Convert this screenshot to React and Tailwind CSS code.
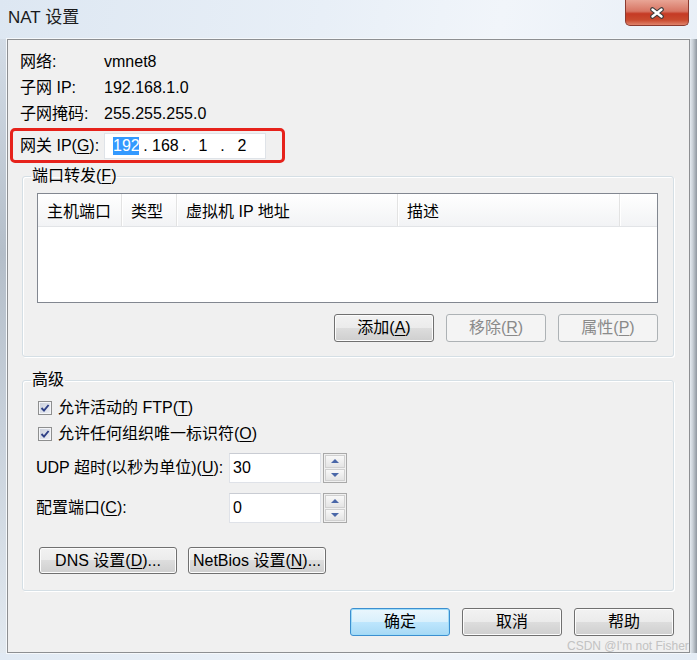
import React from "react";

const btnBase =
  "flex items-center justify-center rounded-[3px] border text-[16px] leading-[20px] whitespace-nowrap";
const btnNormal =
  "border-[#707070] bg-[linear-gradient(#f2f2f2_0%,#ebebeb_50%,#dddddd_50%,#cfcfcf_100%)] shadow-[inset_0_0_0_1px_#fcfcfc] text-black";
const btnDisabled = "border-[#adb2b5] bg-[#f4f4f4] text-[#8a8a8a]";
const btnPrimary =
  "border-[#3c8fd0] bg-[linear-gradient(#eaf6fd_0%,#d9f0fc_50%,#bee6fd_50%,#a7d9f5_100%)] shadow-[inset_0_0_0_1px_#9fdcf8] text-black";

const columns = [
  { id: 1, label: "主机端口", w: "w-[84px]" },
  { id: 2, label: "类型", w: "w-[55px]" },
  { id: 3, label: "虚拟机 IP 地址", w: "w-[221px]" },
  { id: 4, label: "描述", w: "w-[222px]" },
];

const CheckBox = () => (
  <div className="flex h-[14px] w-[14px] items-center justify-center border border-[#8e8f8f] bg-[linear-gradient(135deg,#c9cfdc,#eef0f5)] shadow-[inset_0_0_0_1px_#f4f5f8]">
    <svg width="10" height="10" viewBox="0 0 10 10">
      <path d="M1.5 5 L4 7.6 L8.6 2" fill="none" stroke="#2d3f86" strokeWidth="1.9" />
    </svg>
  </div>
);

const Spinner = () => (
  <div className="ml-[2px] flex h-[30px] w-[24px] flex-col gap-[1px] border border-[#a9a9a9] bg-[#f0f0f0] p-[1px]">
    <div className="flex flex-1 items-center justify-center border border-[#d0d0d0] bg-[linear-gradient(#f8f8f8,#e4e4e4)]">
      <svg width="8" height="4" viewBox="0 0 8 4">
        <polygon points="0,4 4,0 8,4" fill="#4a67a8" />
      </svg>
    </div>
    <div className="flex flex-1 items-center justify-center border border-[#d0d0d0] bg-[linear-gradient(#f8f8f8,#e4e4e4)]">
      <svg width="8" height="4" viewBox="0 0 8 4">
        <polygon points="0,0 8,0 4,4" fill="#4a67a8" />
      </svg>
    </div>
  </div>
);

const App = () => {
  return (
    <div className="relative flex h-[660px] w-[697px] flex-col overflow-hidden bg-[linear-gradient(100deg,#dde7f2_0%,#e8eff7_40%,#f1f5fa_62%,#e4ecf5_100%)] font-[family-name:'Liberation_Sans','Noto_Sans_CJK_SC',sans-serif] text-[16px] leading-[20px] text-black">
      {/* title bar */}
      <div className="flex h-[39px] shrink-0">
        <div className="pl-[8px] pt-[8px] text-[17px] leading-[20px] text-[#1b1b1b]">NAT 设置</div>
        <div className="ml-auto mr-[8px] flex h-[26px] w-[64px] items-center justify-center rounded-b-[5px] border border-t-0 border-[#8b3a2f] bg-[linear-gradient(#e8a596_0%,#d77563_45%,#c53a24_55%,#c94a2e_80%,#e0836b_100%)]">
          <svg width="16" height="12" viewBox="0 0 16 12">
            <path d="M3.5 2.5 L12.5 9.5 M12.5 2.5 L3.5 9.5" stroke="#3b3b3b" strokeWidth="4.6" strokeLinecap="round" />
            <path d="M3.5 2.5 L12.5 9.5 M12.5 2.5 L3.5 9.5" stroke="#ffffff" strokeWidth="2.4" strokeLinecap="round" />
          </svg>
        </div>
      </div>

      <div className="flex h-[614px] shrink-0">
        <div className="w-[7px] bg-[linear-gradient(#d3dce6,#b4bec9_35%,#c9d2dc_65%,#e2e9f0)]" />

        {/* client */}
        <div className="flex h-[614px] w-[683px] flex-col border border-[#8d8f92] bg-[#f0f0f0] shadow-[0_0_0_1px_#f5f8fb]">
          <div className="pl-[12px] pt-[9px]">
            <div className="flex h-[26px] items-center">
              <span className="w-[84px]">网络:</span>
              <span>vmnet8</span>
            </div>
            <div className="flex h-[26px] items-center">
              <span className="w-[84px]">子网 IP:</span>
              <span>192.168.1.0</span>
            </div>
            <div className="flex h-[26px] items-center">
              <span className="w-[84px]">子网掩码:</span>
              <span>255.255.255.0</span>
            </div>
          </div>

          <div className="ml-[2px] mt-[1px] flex h-[35px] w-[275px] items-center rounded-[5px] border-[3px] border-[#e6221b] pl-[7px]">
            <span className="w-[84px]">
              网关 IP(<u className="underline-offset-[2px]">G</u>):
            </span>
            <div className="flex h-[26px] w-[162px] items-center border border-[#dfe3e8] bg-white pl-[8px]">
              <span className="w-[26px] bg-[#3399ff] text-center leading-[18px] text-white">192</span>
              <span className="w-[13px] text-center">.</span>
              <span className="w-[26px] text-center">168</span>
              <span className="w-[12px] text-center">.</span>
              <span className="w-[26px] text-center">1</span>
              <span className="w-[13px] text-center">.</span>
              <span className="w-[26px] text-center">2</span>
            </div>
          </div>

          {/* port forwarding */}
          <fieldset className="ml-[14px] mr-[15px] mt-[3px] rounded-[3px] border border-[#d5dfe5] px-[8px] pb-[14px] shadow-[inset_1px_1px_0_#fff,1px_1px_0_#fff]">
            <legend className="px-[1px] leading-[20px]">
              端口转发(<u className="underline-offset-[2px]">F</u>)
            </legend>
            <div className="ml-[6px] mr-[7px] mt-[7px] h-[110px] border border-[#828790] bg-white">
              <div className="flex h-[33px] border-b border-[#e2e4e7] bg-[linear-gradient(#ffffff,#f2f3f5)]">
                {columns.map((c) => (
                  <div
                    key={c.id}
                    className={`${c.w} border-r border-[#e3e3e3] pl-[9px] pt-[8px] leading-[20px] shadow-[1px_0_0_#fff]`}
                  >
                    {c.label}
                  </div>
                ))}
                <div className="flex-1" />
              </div>
            </div>
            <div className="mr-[7px] mt-[11px] flex justify-end gap-[12px]">
              <div className={`${btnBase} ${btnNormal} h-[28px] w-[100px]`}>
                添加(<u className="underline-offset-[2px]">A</u>)
              </div>
              <div className={`${btnBase} ${btnDisabled} h-[28px] w-[100px]`}>
                移除(<u className="underline-offset-[2px]">R</u>)
              </div>
              <div className={`${btnBase} ${btnDisabled} h-[28px] w-[100px]`}>
                属性(<u className="underline-offset-[2px]">P</u>)
              </div>
            </div>
          </fieldset>

          {/* advanced */}
          <fieldset className="ml-[14px] mr-[15px] mt-[13px] rounded-[3px] border border-[#d5dfe5] px-[8px] pb-[16px] shadow-[inset_1px_1px_0_#fff,1px_1px_0_#fff]">
            <legend className="px-[1px] leading-[20px]">高级</legend>
            <div className="mt-[5px] flex h-[26px] items-center pl-[7px]">
              <CheckBox />
              <span className="ml-[6px]">
                允许活动的 FTP(<u className="underline-offset-[2px]">T</u>)
              </span>
            </div>
            <div className="flex h-[26px] items-center pl-[7px]">
              <CheckBox />
              <span className="ml-[6px]">
                允许任何组织唯一标识符(<u className="underline-offset-[2px]">O</u>)
              </span>
            </div>
            <div className="mt-[6px] flex h-[30px] items-center pl-[5px]">
              <span className="w-[193px]">
                UDP 超时(以秒为单位)(<u className="underline-offset-[2px]">U</u>):
              </span>
              <div className="h-[30px] w-[92px] border border-[#dfe2e8] border-t-[#c9ccd3] bg-white pl-[3px] pt-[4px] leading-[20px]">
                30
              </div>
              <Spinner />
            </div>
            <div className="mt-[10px] flex h-[30px] items-center pl-[5px]">
              <span className="w-[193px]">
                配置端口(<u className="underline-offset-[2px]">C</u>):
              </span>
              <div className="h-[30px] w-[92px] border border-[#dfe2e8] border-t-[#c9ccd3] bg-white pl-[3px] pt-[4px] leading-[20px]">
                0
              </div>
              <Spinner />
            </div>
            <div className="mt-[24px] flex gap-[11px] pl-[8px]">
              <div className={`${btnBase} ${btnNormal} h-[27px] w-[138px]`}>
                DNS 设置(<u className="underline-offset-[2px]">D</u>)...
              </div>
              <div className={`${btnBase} ${btnNormal} h-[27px] w-[138px]`}>
                NetBios 设置(<u className="underline-offset-[2px]">N</u>)...
              </div>
            </div>
          </fieldset>

          <div className="mr-[15px] mt-[17px] flex justify-end gap-[12px]">
            <div className={`${btnBase} ${btnPrimary} h-[28px] w-[100px]`}>确定</div>
            <div className={`${btnBase} ${btnNormal} h-[28px] w-[100px]`}>取消</div>
            <div className={`${btnBase} ${btnNormal} h-[28px] w-[100px]`}>帮助</div>
          </div>
        </div>

        <div className="w-[7px] bg-[linear-gradient(90deg,#e4eaf0_0%,#c9d0d7_40%,#8e969f_100%)]" />
      </div>
      <div className="h-[7px] shrink-0" />

      <div className="absolute left-[567px] top-[638px] text-[12px] leading-[17px] text-[#c2c2c2]">
        CSDN @I'm not Fisher
      </div>
    </div>
  );
};

export default App;
